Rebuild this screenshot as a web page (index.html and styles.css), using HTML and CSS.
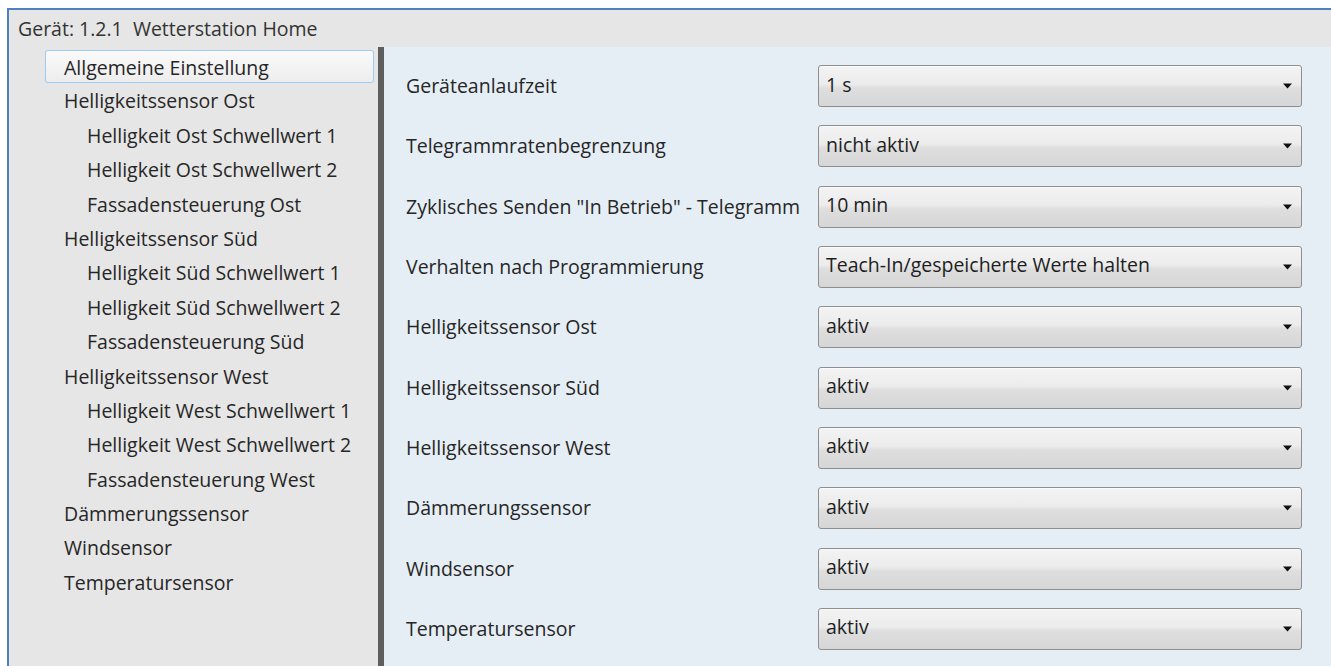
FILE: index.html
```html
<!DOCTYPE html>
<html lang="de">
<head>
<meta charset="utf-8">
<title>Gerät: 1.2.1 Wetterstation Home</title>
<link rel="stylesheet" href="styles.css">
</head>
<body>
<div class="caption"><span class="caption-text">Abbildung 4: Einstellung der allgemeinen Einstellungen</span></div>
<div class="window">
  <div class="titlebar">Gerät: 1.2.1&nbsp; Wetterstation Home</div>
  <div class="main">
    <nav class="tree">
      <div class="item lvl1 selected">Allgemeine Einstellung</div>
      <div class="item lvl1">Helligkeitssensor Ost</div>
      <div class="item lvl2">Helligkeit Ost Schwellwert 1</div>
      <div class="item lvl2">Helligkeit Ost Schwellwert 2</div>
      <div class="item lvl2">Fassadensteuerung Ost</div>
      <div class="item lvl1">Helligkeitssensor Süd</div>
      <div class="item lvl2">Helligkeit Süd Schwellwert 1</div>
      <div class="item lvl2">Helligkeit Süd Schwellwert 2</div>
      <div class="item lvl2">Fassadensteuerung Süd</div>
      <div class="item lvl1">Helligkeitssensor West</div>
      <div class="item lvl2">Helligkeit West Schwellwert 1</div>
      <div class="item lvl2">Helligkeit West Schwellwert 2</div>
      <div class="item lvl2">Fassadensteuerung West</div>
      <div class="item lvl1">Dämmerungssensor</div>
      <div class="item lvl1">Windsensor</div>
      <div class="item lvl1">Temperatursensor</div>
    </nav>
    <div class="splitter"></div>
    <section class="params">
      <div class="row"><span class="label">Geräteanlaufzeit</span><div class="select"><span>1 s</span><svg class="arrow" viewBox="0 0 9 5"><polygon points="0,0 9,0 4.5,5"/></svg></div></div>
      <div class="row"><span class="label">Telegrammratenbegrenzung</span><div class="select"><span>nicht aktiv</span><svg class="arrow" viewBox="0 0 9 5"><polygon points="0,0 9,0 4.5,5"/></svg></div></div>
      <div class="row"><span class="label">Zyklisches Senden "In Betrieb" - Telegramm</span><div class="select"><span>10 min</span><svg class="arrow" viewBox="0 0 9 5"><polygon points="0,0 9,0 4.5,5"/></svg></div></div>
      <div class="row"><span class="label">Verhalten nach Programmierung</span><div class="select"><span>Teach-In/gespeicherte Werte halten</span><svg class="arrow" viewBox="0 0 9 5"><polygon points="0,0 9,0 4.5,5"/></svg></div></div>
      <div class="row"><span class="label">Helligkeitssensor Ost</span><div class="select"><span>aktiv</span><svg class="arrow" viewBox="0 0 9 5"><polygon points="0,0 9,0 4.5,5"/></svg></div></div>
      <div class="row"><span class="label">Helligkeitssensor Süd</span><div class="select"><span>aktiv</span><svg class="arrow" viewBox="0 0 9 5"><polygon points="0,0 9,0 4.5,5"/></svg></div></div>
      <div class="row"><span class="label">Helligkeitssensor West</span><div class="select"><span>aktiv</span><svg class="arrow" viewBox="0 0 9 5"><polygon points="0,0 9,0 4.5,5"/></svg></div></div>
      <div class="row"><span class="label">Dämmerungssensor</span><div class="select"><span>aktiv</span><svg class="arrow" viewBox="0 0 9 5"><polygon points="0,0 9,0 4.5,5"/></svg></div></div>
      <div class="row"><span class="label">Windsensor</span><div class="select"><span>aktiv</span><svg class="arrow" viewBox="0 0 9 5"><polygon points="0,0 9,0 4.5,5"/></svg></div></div>
      <div class="row"><span class="label">Temperatursensor</span><div class="select"><span>aktiv</span><svg class="arrow" viewBox="0 0 9 5"><polygon points="0,0 9,0 4.5,5"/></svg></div></div>
    </section>
  </div>
</div>
</body>
</html>
```
FILE: styles.css
```css
html, body {
  margin: 0;
  padding: 0;
  background: #ffffff;
  height: 100%;
  overflow: hidden;
}

body {
  font-family: "Open Sans", "Noto Sans", sans-serif;
  font-size: 19.5px;
  color: #262626;
}

/* document caption line above the window, only its descenders remain visible */
.caption {
  height: 8px;
  overflow: hidden;
  padding-left: 22px;
}

.caption-text {
  display: block;
  font-size: 20px;
  line-height: 20px;
  margin-top: -22px;
  color: #000;
  white-space: nowrap;
}

.window {
  margin-left: 7px;
  height: 658px;
  box-sizing: border-box;
  border-top: 2px solid #4f81bd;
  border-left: 2px solid #4f81bd;
  background: #e6e6e6;
  display: flex;
  flex-direction: column;
}

.titlebar {
  height: 37px;
  line-height: 37px;
  padding-left: 9px;
  color: #333;
  white-space: nowrap;
}

.main {
  flex: 1;
  display: flex;
  min-height: 0;
}

/* navigation tree */
.tree {
  width: 369px;
  flex: none;
  padding-top: 3px;
  box-sizing: border-box;
}

.item {
  height: 34.4px;
  line-height: 34.4px;
  white-space: nowrap;
  color: #262626;
}

.lvl1 { padding-left: 55px; }
.lvl2 { padding-left: 78px; }

.item.selected {
  margin-left: 36px;
  margin-right: 4px;
  padding-left: 18px;
  height: 33px;
  line-height: 33px;
  margin-bottom: 1.4px;
  box-sizing: border-box;
  border: 1px solid #9fcbf0;
  border-radius: 3px;
  background: linear-gradient(to bottom, #fafafa, #ededed);
}

.splitter {
  width: 6px;
  flex: none;
  background: #5e5e5e;
}

/* parameter list */
.params {
  flex: 1;
  background: #e6eef5;
  padding: 18px 29px 0 22px;
  display: flex;
  flex-direction: column;
  gap: 18.33px;
}

.row {
  display: flex;
  align-items: center;
  height: 42px;
}

.label {
  width: 412px;
  flex: none;
  line-height: 42px;
  white-space: nowrap;
  color: #262626;
}

.select {
  flex: 1;
  height: 42px;
  box-sizing: border-box;
  border: 1px solid #8e8e8e;
  border-radius: 3px;
  background: linear-gradient(to bottom, #f3f3f3 0%, #ececec 45%, #dedede 55%, #d6d6d6 100%);
  display: flex;
  align-items: center;
  justify-content: space-between;
  padding: 0 9px 0 7px;
  box-shadow: inset 0 1px 0 #fbfbfb;
}

.select span {
  line-height: 38px;
  margin-top: -3px;
  white-space: nowrap;
  color: #1e1e1e;
}

.arrow {
  width: 9px;
  height: 6px;
  fill: #111;
  flex: none;
}
```
